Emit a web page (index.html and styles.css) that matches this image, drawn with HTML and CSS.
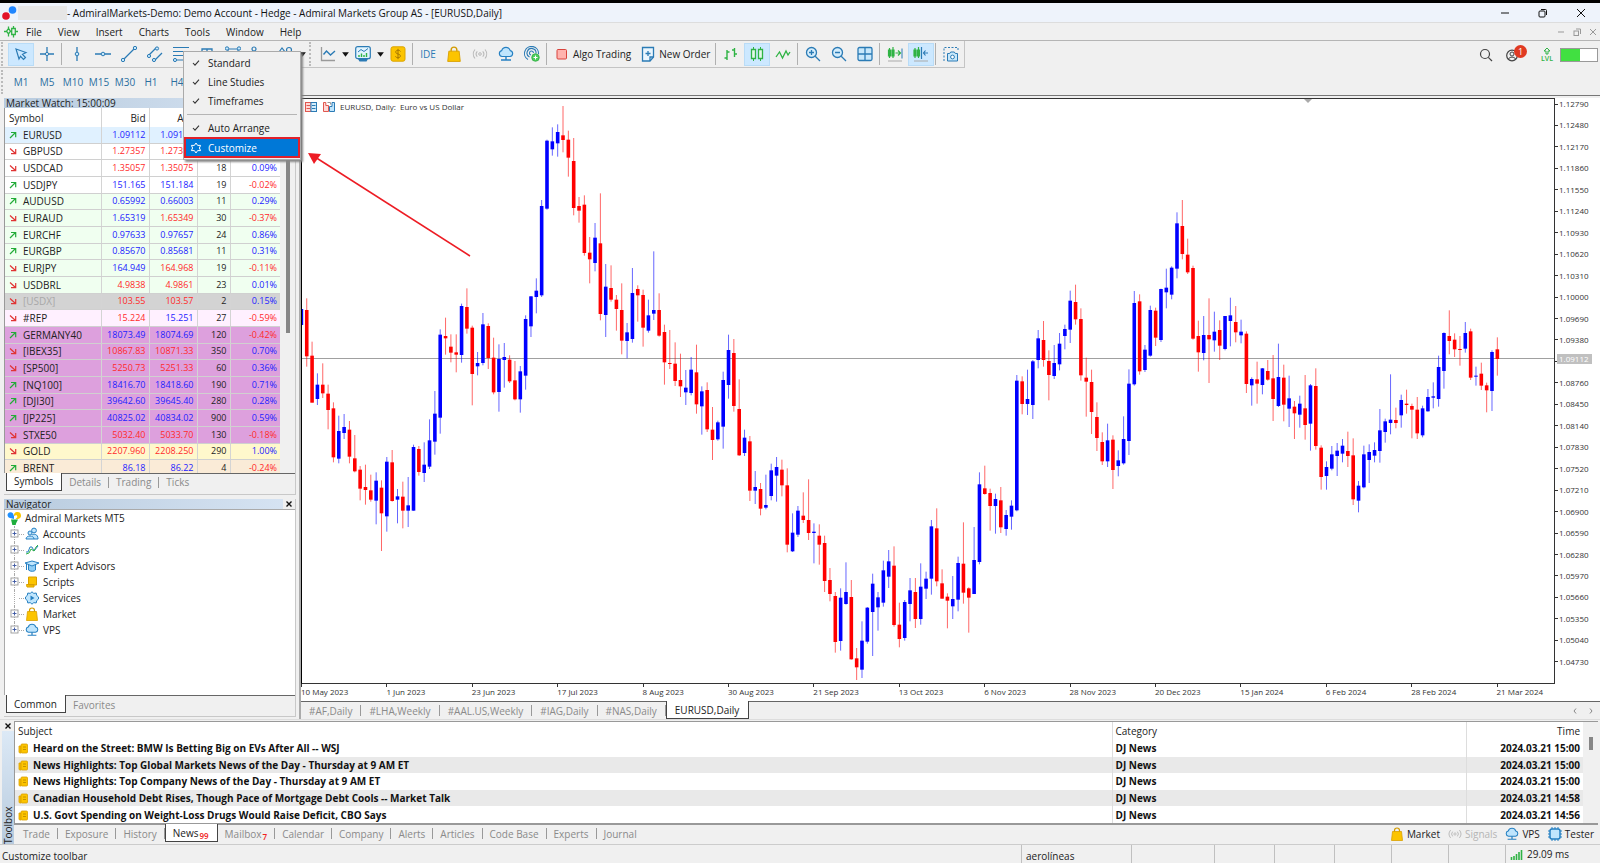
FILE: index.html
```html
<!DOCTYPE html>
<html lang="en">
<head>
<meta charset="utf-8">
<title>AdmiralMarkets-Demo - [EURUSD,Daily]</title>
<link rel="stylesheet" href="styles.css">
</head>
<body>
<svg class="defs" aria-hidden="true">
  <symbol id="up" viewBox="0 0 8 8"><path d="M1 7L6.500 1.500M2 1.500h4.700v4.700" fill="none" stroke="#22ac38" stroke-width="1.200"/></symbol>
  <symbol id="down" viewBox="0 0 8 8"><path d="M1 1.500l5.500 5M2 6.700h4.700V2" fill="none" stroke="#e03434" stroke-width="1.200"/></symbol>
  <symbol id="bag" viewBox="0 0 14 14"><path d="M4.500 6V3.500a2.500 2.500 0 0 1 5 0V6" fill="none" stroke="#d29a00" stroke-width="1.200"/><path d="M2.500 4.500h9l1 9h-11z" fill="#fcc400" stroke="#d9a000" stroke-width=".8"/></symbol>
  <symbol id="cloud" viewBox="0 0 16 16"><path d="M4 10.500a3 3 0 0 1-.3-5.900 4.500 4.500 0 0 1 8.600 0 3 3 0 0 1-.3 5.900z" fill="#bfe5fd" stroke="#2680c2" stroke-width="1.200"/><path d="M8 10.500v3M3 14h10M6.500 14h3" fill="none" stroke="#2680c2" stroke-width="1.400"/></symbol>
  <symbol id="signal" viewBox="0 0 16 12"><path d="M3 1.500a7 7 0 0 0 0 9M13 1.500a7 7 0 0 1 0 9M5.300 3.300a4 4 0 0 0 0 5.400M10.700 3.300a4 4 0 0 1 0 5.400" fill="none" stroke="#b9b9b9" stroke-width="1.100"/><circle cx="8" cy="6" r="1.300" fill="none" stroke="#b9b9b9"/></symbol>
  <symbol id="news" viewBox="0 0 10 11"><path d="M1 3h2v7H2a1 1 0 0 1-1-1z" fill="#fcc400" stroke="#d9a000" stroke-width=".8"/><rect x="3" y="1" width="6.500" height="9" rx="1" fill="#fcc400" stroke="#d9a000" stroke-width=".8"/><path d="M5 4h3M5 6.500h3" stroke="#b88600" stroke-width=".8"/></symbol>
  <symbol id="check" viewBox="0 0 8 8"><path d="M1 4l2 2.200 4-4.500" fill="none" stroke="#333" stroke-width="1.100"/></symbol>
  <symbol id="caret" viewBox="0 0 8 8"><path d="M1 2h6L4 6z" fill="#111"/></symbol>
  <symbol id="plus" viewBox="0 0 9 9"><rect x="1" y="1" width="7" height="7" fill="#fff" stroke="#999" stroke-width=".9"/><path d="M2.500 4.500h4M4.500 2.500v4" stroke="#3a55a0" stroke-width=".9"/></symbol>
</svg>
<div class="window">
<header class="titlebar">
  <svg class="logo" viewBox="0 0 16 16"><circle cx="10.500" cy="5" r="3.800" fill="#1f86ff"/><circle cx="4" cy="11" r="3.800" fill="#e2122a"/></svg>
  <span class="redact"></span>
  <h1>- AdmiralMarkets-Demo: Demo Account - Hedge - Admiral Markets Group AS - [EURUSD,Daily]</h1>
  <div class="winbtns">
    <button aria-label="Minimize"><svg viewBox="0 0 10 10"><path d="M1 5h8" stroke="#111"/></svg></button>
    <button aria-label="Restore"><svg viewBox="0 0 10 10"><rect x="1" y="3" width="6" height="6" rx="1" fill="none" stroke="#111"/><path d="M3 1.500h4.500a1 1 0 0 1 1 1V7" fill="none" stroke="#111"/></svg></button>
    <button aria-label="Close"><svg viewBox="0 0 10 10"><path d="M1 1l8 8M9 1L1 9" stroke="#111"/></svg></button>
  </div>
</header>
<nav class="menubar">
  <svg class="mt" viewBox="0 0 14 14"><path d="M4.500 1.500v2M4.500 9v2.500M9.500 1v2M9.500 9.500v3M4.500 3.500l2 2.700-2 2.800-2-2.800zM7.700 3.500h3.600v6H7.700zM11.500 6.500H14M0 6.500h2.500" fill="none" stroke="#2fb344" stroke-width="1.300"/></svg>
  <button>File</button><button>View</button><button>Insert</button><button>Charts</button><button>Tools</button><button>Window</button><button>Help</button>
  <div class="mdibtns">
    <button aria-label="Minimize chart"><svg viewBox="0 0 10 10"><path d="M2 5h6" stroke="#999"/></svg></button>
    <button aria-label="Restore chart"><svg viewBox="0 0 10 10"><rect x="2" y="4" width="4.500" height="4.500" fill="none" stroke="#999"/><path d="M4 2h4.500v5" fill="none" stroke="#999"/></svg></button>
    <button aria-label="Close chart"><svg viewBox="0 0 10 10"><path d="M2 2l6 6M8 2L2 8" stroke="#999"/></svg></button>
  </div>
</nav>
<div class="toolbar">
  <div class="tools">
    <i class="grip"></i>
    <button class="tool on" aria-label="Cursor"><svg viewBox="0 0 16 16"><path d="M3 3l10 3.500-3.500 1.800 3 3.200-2 2-3-3.200L6 13z" fill="none" stroke="#2b7bb5" stroke-width="1.200"/></svg></button>
    <button class="tool" aria-label="Crosshair"><svg viewBox="0 0 16 16"><path d="M8 1v5.500M8 9.500V15M1 8h5.500M9.500 8H15" stroke="#2b7bb5" stroke-width="1.300"/><circle cx="8" cy="8" r="1.600" fill="none" stroke="#2b7bb5"/></svg></button>
    <i class="sep"></i>
    <button class="tool" aria-label="Vertical line"><svg viewBox="0 0 16 16"><path d="M8 1v5M8 10v5" stroke="#2b7bb5" stroke-width="1.300"/><circle cx="8" cy="8" r="1.800" fill="#c8e8fb" stroke="#2b7bb5"/></svg></button>
    <button class="tool" aria-label="Horizontal line"><svg viewBox="0 0 16 16"><path d="M0 8h6M10 8h6" stroke="#2b7bb5" stroke-width="1.300"/><circle cx="8" cy="8" r="1.800" fill="#c8e8fb" stroke="#2b7bb5"/></svg></button>
    <button class="tool" aria-label="Trendline"><svg viewBox="0 0 16 16"><path d="M3 13L13 3" stroke="#2b7bb5" stroke-width="1.300"/><circle cx="2" cy="14" r="1.700" fill="#c8e8fb" stroke="#2b7bb5"/><circle cx="14" cy="2" r="1.700" fill="#c8e8fb" stroke="#2b7bb5"/></svg></button>
    <button class="tool" aria-label="Equidistant channel"><svg viewBox="0 0 16 16"><path d="M2 9l7-7M8 14l7-7" stroke="#2b7bb5" stroke-width="1.300"/><circle cx="2" cy="10" r="1.600" fill="#c8e8fb" stroke="#2b7bb5"/><circle cx="10" cy="2.500" r="1.600" fill="#c8e8fb" stroke="#2b7bb5"/><circle cx="7" cy="14" r="1.600" fill="#c8e8fb" stroke="#2b7bb5"/></svg></button>
    <button class="tool" aria-label="Fibonacci retracement"><svg viewBox="0 0 16 16"><path d="M0 1.500h16M0 5.500h16M0 9.500h16M4 14h12" stroke="#2b7bb5" stroke-width="1.200"/><circle cx="2" cy="14" r="1.600" fill="#c8e8fb" stroke="#2b7bb5"/></svg></button>
    <button class="tool" aria-label="Text"><svg viewBox="0 0 16 16"><path d="M3 5V3h10v2M8 3v11" fill="none" stroke="#2b7bb5" stroke-width="1.300"/></svg></button>
    <button class="tool" aria-label="Shapes"><svg viewBox="0 0 16 16"><path d="M3 3h10v9H3z" fill="none" stroke="#2b7bb5" stroke-width="1.200"/><circle cx="2" cy="2.500" r="1.700" fill="#c8e8fb" stroke="#2b7bb5"/><circle cx="14" cy="2.500" r="1.700" fill="#c8e8fb" stroke="#2b7bb5"/></svg></button>
    <button class="tool" aria-label="Label"><svg viewBox="0 0 16 16"><circle cx="3" cy="3" r="2" fill="none" stroke="#2b7bb5" stroke-width="1.200"/><path d="M4 5l6 9" stroke="#2b7bb5"/></svg></button>
    <button class="tool" aria-label="Objects"><svg viewBox="0 0 16 16"><path d="M2 6l3-4 3 4z" fill="none" stroke="#2b7bb5" stroke-width="1.200"/><circle cx="12" cy="4" r="2.500" fill="none" stroke="#2b7bb5" stroke-width="1.200"/></svg></button>
    <svg class="caret"><use href="#caret"/></svg>
    <i class="grip far"></i>
    <button class="tool" aria-label="Chart type"><svg viewBox="0 0 16 16"><path d="M1.500 1v13.500H15" fill="none" stroke="#9a9a9a" stroke-width="1.300"/><path d="M3.500 8.500l3-3.500 4 4 4.500-4" fill="none" stroke="#2b7bb5" stroke-width="1.400"/></svg></button>
    <svg class="caret"><use href="#caret"/></svg>
    <button class="tool" aria-label="Indicators"><svg viewBox="0 0 16 16"><path d="M3 13h10l-1.500 2.500h-7z" fill="#2b7bb5"/><rect x=".7" y=".7" width="14.600" height="12" rx="2" fill="#e2f4fe" stroke="#2b7bb5" stroke-width="1.200"/><path d="M3 6l3-2.500 3 2L13 2.500" fill="none" stroke="#2b7bb5"/><path d="M4 11V9M6.500 11V7.500M9 11V9M11.500 11V7" stroke="#2fb344" stroke-width="1.400"/></svg></button>
    <svg class="caret"><use href="#caret"/></svg>
    <button class="tool" aria-label="Trade levels"><svg viewBox="0 0 16 16"><rect x="1" y=".8" width="14" height="14.400" rx="2" fill="#fcc400" stroke="#dba400"/><path d="M10.500 5.500C10 4.500 9 4.300 8 4.300c-1.300 0-2.300.6-2.300 1.800 0 2.500 4.700 1.300 4.700 3.800 0 1.200-1 1.800-2.400 1.800-1.200 0-2.200-.4-2.500-1.400M8 2.800v10.400" fill="none" stroke="#a87800"/></svg></button>
    <i class="sep"></i>
    <button class="tool ide">IDE</button>
    <button class="tool" aria-label="Market"><svg><use href="#bag"/></svg></button>
    <button class="tool" aria-label="Signals"><svg><use href="#signal"/></svg></button>
    <button class="tool" aria-label="VPS"><svg><use href="#cloud"/></svg></button>
    <button class="tool" aria-label="Copy trading"><svg viewBox="0 0 16 16"><path d="M4 13.500A7 7 0 1 1 14.500 8M5.500 11A4.500 4.500 0 1 1 12 7.500M7 9A2 2 0 1 1 9.500 7" fill="none" stroke="#2b7bb5" stroke-width="1.100"/><circle cx="11.500" cy="11.500" r="3.800" fill="#4fce5d" stroke="#28a83c" stroke-width=".7"/><path d="M9.500 11.500h4M11.500 9.500v4" stroke="#fff"/></svg></button>
    <i class="sep"></i>
    <button class="tool wide"><svg viewBox="0 0 16 16"><rect x="3" y="3.500" width="9.500" height="9.500" rx="1" fill="#ffb3ae" stroke="#d8433c"/></svg>Algo Trading</button>
    <button class="tool wide"><svg viewBox="0 0 16 16"><path d="M2.500 1.500h11V11L10 15H2.500z" fill="#eaf6fe" stroke="#2b7bb5" stroke-width="1.300"/><path d="M5.500 7.500h5M8 5v5M10 15v-4h3.500" fill="none" stroke="#2b7bb5" stroke-width="1.300"/></svg>New Order</button>
    <i class="sep"></i>
    <button class="tool" aria-label="Bar chart"><svg viewBox="0 0 16 16"><path d="M4 4v10M1.500 12H4M4 6h2.500M11.500 2v9M9 4h2.500M11.500 8H14" fill="none" stroke="#2fb344" stroke-width="1.400"/></svg></button>
    <button class="tool on" aria-label="Candlesticks"><svg viewBox="0 0 16 16"><path d="M4.500 1v14M11.500 1v14" stroke="#2fb344"/><path d="M2.500 3.500h4v9h-4zM9.500 3.500h4v9h-4z" fill="#e4f8e8" stroke="#2fb344" stroke-width="1.300"/></svg></button>
    <button class="tool" aria-label="Line chart"><svg viewBox="0 0 16 16"><path d="M1 11l3.500-5 3 6 3.500-7 2 4 2-3" fill="none" stroke="#2fb344" stroke-width="1.300"/></svg></button>
    <i class="sep"></i>
    <button class="tool" aria-label="Zoom in"><svg viewBox="0 0 16 16"><circle cx="6.500" cy="6.500" r="5" fill="#d4edfc" stroke="#2b7bb5" stroke-width="1.300"/><path d="M10.200 10.200L15 15M4 6.500h5M6.500 4v5" stroke="#2b7bb5" stroke-width="1.300"/></svg></button>
    <button class="tool" aria-label="Zoom out"><svg viewBox="0 0 16 16"><circle cx="6.500" cy="6.500" r="5" fill="#d4edfc" stroke="#2b7bb5" stroke-width="1.300"/><path d="M10.200 10.200L15 15M4 6.500h5" stroke="#2b7bb5" stroke-width="1.300"/></svg></button>
    <button class="tool" aria-label="Tile windows"><svg viewBox="0 0 16 16"><rect x="1" y="1.500" width="14" height="13" rx="1.500" fill="#c8e8fb" stroke="#2b7bb5" stroke-width="1.300"/><path d="M8 1.500v13M1 8h14" stroke="#2b7bb5" stroke-width="1.300"/></svg></button>
    <i class="sep"></i>
    <button class="tool" aria-label="Auto scroll"><svg viewBox="0 0 16 16"><path d="M2.500 2v10M6 1v11M1.500 4h2v6h-2zM5 4h2v6H5zM8.500 7H13M11 4.500L13.500 7 11 9.500" fill="none" stroke="#2fb344" stroke-width="1.200"/><path d="M15 2.500v10" stroke="#2b7bb5"/><path d="M1 15h14" stroke="#aaa"/></svg></button>
    <button class="tool on" aria-label="Chart shift"><svg viewBox="0 0 16 16"><path d="M2 2v10M5.500 1v11M1 4h2v6H1zM4.500 4h2v6h-2z" fill="none" stroke="#2fb344" stroke-width="1.200"/><path d="M8.500 1v12M15 7h-4.500M12.500 4.500L10.500 7l2 2.500" fill="none" stroke="#2b7bb5" stroke-width="1.200"/><path d="M1 15h14" stroke="#aaa"/></svg></button>
    <i class="sep"></i>
    <button class="tool" aria-label="Screenshot"><svg viewBox="0 0 16 16"><path d="M1 15V1.500h14V5" fill="none" stroke="#2b7bb5" stroke-dasharray="2 1.500"/><path d="M4.500 7.500h2.200l1-1.500h3.600l1 1.500h2.200V15h-10z" fill="#c8e8fb" stroke="#2b7bb5"/><circle cx="9.500" cy="11" r="1.900" fill="#fff" stroke="#2b7bb5"/></svg></button>
  </div>
  <div class="right-tools">
    <button class="tool" aria-label="Search"><svg viewBox="0 0 16 16"><circle cx="7" cy="7" r="4.500" fill="none" stroke="#444" stroke-width="1.200"/><path d="M10.300 10.300L14 14" stroke="#444" stroke-width="1.200"/></svg></button>
    <button class="tool account" aria-label="Account"><svg viewBox="0 0 16 16"><circle cx="8" cy="8.500" r="5.300" fill="none" stroke="#444" stroke-width="1.200"/><circle cx="8" cy="7" r="2" fill="none" stroke="#444"/><path d="M4.500 12c1-2.500 6-2.500 7 0" fill="none" stroke="#444"/></svg><b class="badge">1</b></button>
    <div class="level"><svg viewBox="0 0 10 8"><path d="M5 1l3 3H6v3H4V4H2z" fill="none" stroke="#2fb344"/></svg><span>LVL</span></div>
    <div class="meter"><i></i></div>
  </div>
</div>
<div class="timeframes">
  <i class="grip"></i>
  <button>M1</button><button>M5</button><button>M10</button><button>M15</button><button>M30</button><button>H1</button><button>H4</button>
</div>
<main class="workspace">
  <aside class="dock">
    <section class="panel market">
      <h2 class="caption">Market Watch: 15:00:09</h2>
      <div class="quotes">
        <table>
          <thead><tr><th>Symbol</th><th>Bid</th><th>Ask</th><th>!</th><th>Change</th></tr></thead>
          <tbody>
          <tr class="sky"><td><svg><use href="#up"/></svg>EURUSD</td><td class="b">1.09112</td><td class="b">1.09116</td><td>4</td><td class="b">0.00%</td></tr>
          <tr><td><svg><use href="#down"/></svg>GBPUSD</td><td class="r">1.27357</td><td class="r">1.27364</td><td>7</td><td class="r">-0.36%</td></tr>
          <tr><td><svg><use href="#down"/></svg>USDCAD</td><td class="r">1.35057</td><td class="r">1.35075</td><td>18</td><td class="b">0.09%</td></tr>
          <tr><td><svg><use href="#up"/></svg>USDJPY</td><td class="b">151.165</td><td class="b">151.184</td><td>19</td><td class="r">-0.02%</td></tr>
          <tr class="mint"><td><svg><use href="#up"/></svg>AUDUSD</td><td class="b">0.65992</td><td class="b">0.66003</td><td>11</td><td class="b">0.29%</td></tr>
          <tr class="mint"><td><svg><use href="#down"/></svg>EURAUD</td><td class="b">1.65319</td><td class="r">1.65349</td><td>30</td><td class="r">-0.37%</td></tr>
          <tr class="mint"><td><svg><use href="#up"/></svg>EURCHF</td><td class="b">0.97633</td><td class="b">0.97657</td><td>24</td><td class="b">0.86%</td></tr>
          <tr class="mint"><td><svg><use href="#up"/></svg>EURGBP</td><td class="b">0.85670</td><td class="b">0.85681</td><td>11</td><td class="b">0.31%</td></tr>
          <tr class="mint"><td><svg><use href="#down"/></svg>EURJPY</td><td class="b">164.949</td><td class="r">164.968</td><td>19</td><td class="r">-0.11%</td></tr>
          <tr class="mint"><td><svg><use href="#down"/></svg>USDBRL</td><td class="r">4.9838</td><td class="r">4.9861</td><td>23</td><td class="b">0.01%</td></tr>
          <tr class="grey"><td><svg><use href="#down"/></svg>[USDX]</td><td class="r">103.55</td><td class="r">103.57</td><td>2</td><td class="b">0.15%</td></tr>
          <tr class="rose"><td><svg><use href="#down"/></svg>#REP</td><td class="r">15.224</td><td class="b">15.251</td><td>27</td><td class="r">-0.59%</td></tr>
          <tr class="plum"><td><svg><use href="#up"/></svg>GERMANY40</td><td class="b">18073.49</td><td class="b">18074.69</td><td>120</td><td class="r">-0.42%</td></tr>
          <tr class="plum"><td><svg><use href="#down"/></svg>[IBEX35]</td><td class="r">10867.83</td><td class="r">10871.33</td><td>350</td><td class="b">0.70%</td></tr>
          <tr class="plum"><td><svg><use href="#down"/></svg>[SP500]</td><td class="r">5250.73</td><td class="r">5251.33</td><td>60</td><td class="b">0.36%</td></tr>
          <tr class="plum"><td><svg><use href="#up"/></svg>[NQ100]</td><td class="b">18416.70</td><td class="b">18418.60</td><td>190</td><td class="b">0.71%</td></tr>
          <tr class="plum"><td><svg><use href="#up"/></svg>[DJI30]</td><td class="b">39642.60</td><td class="b">39645.40</td><td>280</td><td class="b">0.28%</td></tr>
          <tr class="plum"><td><svg><use href="#up"/></svg>[JP225]</td><td class="b">40825.02</td><td class="b">40834.02</td><td>900</td><td class="b">0.59%</td></tr>
          <tr class="plum"><td><svg><use href="#down"/></svg>STXE50</td><td class="r">5032.40</td><td class="r">5033.70</td><td>130</td><td class="r">-0.18%</td></tr>
          <tr class="gold"><td><svg><use href="#down"/></svg>GOLD</td><td class="r">2207.960</td><td class="r">2208.250</td><td>290</td><td class="b">1.00%</td></tr>
          <tr class="peach"><td><svg><use href="#up"/></svg>BRENT</td><td class="b">86.18</td><td class="b">86.22</td><td>4</td><td class="r">-0.24%</td></tr>
          </tbody>
        </table>
        <div class="scroll"><i></i></div>
      </div>
      <div class="tabs"><button class="active">Symbols</button><button>Details</button><button>Trading</button><button>Ticks</button></div>
    </section>
    <section class="panel navigator">
      <h2 class="caption">Navigator<button aria-label="Close navigator"><svg viewBox="0 0 8 8"><path d="M1.500 1.500l5 5M6.500 1.500l-5 5" stroke="#111" stroke-width="1.400"/></svg></button></h2>
      <ul class="tree">
        <li class="root"><svg class="ti" viewBox="0 0 14 14"><path d="M1 2.500a3 3 0 0 1 5 0L7 5v3L3 7A3 3 0 0 1 1 2.500z" fill="#1e90ff"/><path d="M7 5a3.500 3.500 0 1 1 4 3H8.500l2-2-1-2z" fill="#f7c600"/><path d="M4 8.500h7l-2 4a2 2 0 0 1-4 0z" fill="#1fae3d"/></svg>Admiral Markets MT5</li>
        <li><svg class="px"><use href="#plus"/></svg><svg class="ti" viewBox="0 0 14 14"><circle cx="5" cy="6" r="2" fill="#bfe5fd" stroke="#2680c2"/><circle cx="9" cy="3.500" r="2.400" fill="#bfe5fd" stroke="#2680c2"/><path d="M1 12c0-4 8-4 8 0zM7 8c2-1.500 6-1 6 4H9" fill="#bfe5fd" stroke="#2680c2"/></svg>Accounts</li>
        <li><svg class="px"><use href="#plus"/></svg><svg class="ti" viewBox="0 0 14 14"><path d="M1 9h2l2-5h2l2 4 4-5" fill="none" stroke="#2680c2"/><path d="M1 11l3-1 2-4 3 2 2-4 2-2" fill="none" stroke="#2fb344"/></svg>Indicators</li>
        <li><svg class="px"><use href="#plus"/></svg><svg class="ti" viewBox="0 0 14 14"><path d="M3.500 6v5c2 2 6 1.500 7 0V6" fill="#8fcdf5" stroke="#2680c2"/><path d="M0 4l7-2 7 2-7 3z" fill="#bfe5fd" stroke="#2680c2"/><path d="M1.500 5v6" stroke="#2680c2"/></svg>Expert Advisors</li>
        <li><svg class="px"><use href="#plus"/></svg><svg class="ti" viewBox="0 0 14 14"><path d="M3.500 2h8v8h-8zM1.500 9.500H9V12H2z" fill="#fcc400" stroke="#d9a000"/></svg>Scripts</li>
        <li><i class="px"></i><svg class="ti" viewBox="0 0 14 14"><path d="M7 .8l1.800 1.600 2.400-.4.500 2.400L13.500 6v2l-1.800 1.600-.5 2.400-2.400-.4L7 13.200l-1.800-1.600-2.400.4-.5-2.400L.5 8V6l1.800-1.600.5-2.400 2.400.4z" fill="#bfe5fd" stroke="#2680c2"/><path d="M5.500 4.500v5l4-2.500z" fill="#2680c2"/></svg>Services</li>
        <li><svg class="px"><use href="#plus"/></svg><svg class="ti"><use href="#bag"/></svg>Market</li>
        <li class="last"><svg class="px"><use href="#plus"/></svg><svg class="ti"><use href="#cloud"/></svg>VPS</li>
      </ul>
      <div class="tabs"><button class="active">Common</button><button>Favorites</button></div>
    </section>
  </aside>
  <section class="chart-window">
    <div class="chart">
      <div class="plot">
        <svg class="candles" id="candles" viewBox="302 99 1252 584" preserveAspectRatio="none" role="img" aria-label="EURUSD daily candles"></svg>
        <div class="chart-title">
          <svg viewBox="0 0 14 12"><rect x="1.500" y="1.500" width="5.500" height="9" fill="#ffd9d6" stroke="#e0574f"/><rect x="7" y="1.500" width="5.500" height="9" fill="#d4edfc" stroke="#2b7bb5"/><path d="M2.500 4.500h3.500M2.500 7.500h3.500" stroke="#e0574f"/><path d="M8 4.500h3.500M8 7.500h3.500" stroke="#2b7bb5"/></svg>
          <svg viewBox="0 0 14 12"><path d="M1.500 10.500v-9h2.300v3h2.700v6z" fill="#ffd9d6" stroke="#e0574f"/><path d="M7.500 10.500v-5H10v-4h2.500v9z" fill="#bfe5fd" stroke="#2b7bb5"/><path d="M5.500 1.500h3v2" fill="none" stroke="#999"/></svg>
          <span>EURUSD, Daily:&nbsp; Euro vs US Dollar</span>
        </div>
        <i class="shift-mark"></i>
      </div>
      <div class="prices">
        <span>1.12790</span><span>1.12480</span><span>1.12170</span><span>1.11860</span><span>1.11550</span><span>1.11240</span><span>1.10930</span><span>1.10620</span><span>1.10310</span><span>1.10000</span><span>1.09690</span><span>1.09380</span><span>1.09070</span><span>1.08760</span><span>1.08450</span><span>1.08140</span><span>1.07830</span><span>1.07520</span><span>1.07210</span><span>1.06900</span><span>1.06590</span><span>1.06280</span><span>1.05970</span><span>1.05660</span><span>1.05350</span><span>1.05040</span><span>1.04730</span>
        <b class="last-price">1.09112</b>
      </div>
      <div class="dates">
        <span>10 May 2023</span><span>1 Jun 2023</span><span>23 Jun 2023</span><span>17 Jul 2023</span><span>8 Aug 2023</span><span>30 Aug 2023</span><span>21 Sep 2023</span><span>13 Oct 2023</span><span>6 Nov 2023</span><span>28 Nov 2023</span><span>20 Dec 2023</span><span>15 Jan 2024</span><span>6 Feb 2024</span><span>28 Feb 2024</span><span>21 Mar 2024</span>
      </div>
    </div>
    <div class="tabs chart-tabs"><button>#AF,Daily</button><button>#LHA,Weekly</button><button>#AAL.US,Weekly</button><button>#IAG,Daily</button><button>#NAS,Daily</button><button class="active">EURUSD,Daily</button>
      <span class="tab-arrows"><svg viewBox="0 0 6 8"><path d="M4 1.500L2 4l2 2.500" fill="none" stroke="#888"/></svg><svg viewBox="0 0 6 8"><path d="M2 1.500L4 4 2 6.500" fill="none" stroke="#888"/></svg></span></div>
  </section>
</main>
<section class="toolbox">
  <div class="strip"><button aria-label="Close toolbox"><svg viewBox="0 0 8 8"><path d="M1.500 1.500l5 5M6.500 1.500l-5 5" stroke="#111" stroke-width="1.400"/></svg></button><span>Toolbox</span></div>
  <div class="toolbox-body">
    <div class="news">
      <table>
        <thead><tr><th>Subject</th><th>Category</th><th>Time</th></tr></thead>
        <tbody>
        <tr><td><svg><use href="#news"/></svg>Heard on the Street: BMW Is Betting Big on EVs After All -- WSJ</td><td>DJ News</td><td>2024.03.21 15:00</td></tr>
        <tr><td><svg><use href="#news"/></svg>News Highlights: Top Global Markets News of the Day - Thursday at 9 AM ET</td><td>DJ News</td><td>2024.03.21 15:00</td></tr>
        <tr><td><svg><use href="#news"/></svg>News Highlights: Top Company News of the Day - Thursday at 9 AM ET</td><td>DJ News</td><td>2024.03.21 15:00</td></tr>
        <tr><td><svg><use href="#news"/></svg>Canadian Household Debt Rises, Though Pace of Mortgage Debt Cools -- Market Talk</td><td>DJ News</td><td>2024.03.21 14:58</td></tr>
        <tr><td><svg><use href="#news"/></svg>U.S. Govt Spending on Weight-Loss Drugs Would Raise Deficit, CBO Says</td><td>DJ News</td><td>2024.03.21 14:56</td></tr>
        </tbody>
      </table>
      <div class="scroll"><i></i></div>
    </div>
    <div class="tabs"><button>Trade</button><button>Exposure</button><button>History</button><button class="active">News<sub>99</sub></button><button>Mailbox<sub>7</sub></button><button>Calendar</button><button>Company</button><button>Alerts</button><button>Articles</button><button>Code Base</button><button>Experts</button><button>Journal</button>
      <div class="services"><a href="#market"><svg><use href="#bag"/></svg>Market</a><a href="#signals" class="off"><svg><use href="#signal"/></svg>Signals</a><a href="#vps"><svg><use href="#cloud"/></svg>VPS</a><a href="#tester"><svg viewBox="0 0 14 14"><path d="M4 0v14M7 0v14M10 0v14M0 4h14M0 7h14M0 10h14" stroke="#2680c2"/><rect x="2" y="2" width="10" height="10" rx="2" fill="#bfe5fd" stroke="#2680c2" stroke-width="1.500"/></svg>Tester</a></div></div>
  </div>
</section>
<footer class="status">
  <span class="hint">Customize toolbar</span><span class="profile">aerolíneas</span><span class="c83"></span><span class="c60"></span><span class="c60"></span><span class="c57"></span><span class="c57"></span><span class="c57"></span>
  <span class="ping"><svg viewBox="0 0 13 11"><path d="M1.500 11V8M4 11V7M6.500 11V5M9 11V3M11.500 11V1" stroke="#2fb344" stroke-width="1.600"/></svg>29.09 ms</span>
</footer>
<div class="context" role="menu">
  <button role="menuitem"><svg><use href="#check"/></svg>Standard</button>
  <button role="menuitem"><svg><use href="#check"/></svg>Line Studies</button>
  <button role="menuitem"><svg><use href="#check"/></svg>Timeframes</button>
  <hr>
  <button role="menuitem"><svg><use href="#check"/></svg>Auto Arrange</button>
  <button role="menuitem" class="hot"><svg viewBox="0 0 12 12"><path d="M6 1l1.600 2.400h3L9.400 6l1.200 2.600h-3L6 11 4.400 8.600h-3L2.600 6 1.400 3.400h3z" fill="none" stroke="#fff"/></svg>Customize</button>
</div>
<svg class="arrow" viewBox="0 0 166 106" aria-hidden="true"><path d="M8 5l155 99" stroke="#ed1c24" stroke-width="1.500"/><path d="M1 1l13 1-7 10z" fill="#ed1c24"/></svg>
</div>
<script src="chart.js"></script>
</body>
</html>
```
FILE: styles.css
```css
* { box-sizing: border-box; }
body { margin: 0; background: #f0f0f0; color: #222; font: 10px/12px "Open Sans", "Noto Sans", sans-serif; }
button { font: inherit; color: inherit; background: none; border: 0; padding: 0; margin: 0; white-space: nowrap; }
a { color: inherit; text-decoration: none; }
h1, h2 { margin: 0; font: inherit; }
svg { display: block; flex: none; }
.defs { position: absolute; width: 0; height: 0; }
.window { position: relative; display: flex; flex-direction: column; min-height: 100vh; border-top: 3px solid #000; }

.titlebar { display: flex; align-items: center; height: 20px; background: #eef3fb; border-bottom: 1px solid #ddd; }
.logo { width: 16px; height: 16px; margin-left: 2px; }
.redact { width: 49px; height: 14px; background: #e6e6e6; }
.titlebar h1 { color: #111; }
.winbtns { display: flex; margin-left: auto; }
.winbtns button { width: 38px; display: flex; justify-content: center; }
.winbtns svg, .mdibtns svg { width: 10px; height: 10px; }

.menubar { display: flex; align-items: center; gap: 16px; height: 18px; padding-left: 4px; border-bottom: 1px solid #b5b5b5; }
.mt { width: 14px; height: 14px; margin-right: -8px; }
.mdibtns { display: flex; gap: 6px; margin-left: auto; padding-right: 2px; }

.toolbar { display: flex; align-items: center; justify-content: space-between; height: 27px; }
.tools { display: flex; align-items: center; height: 27px; border-bottom: 1px solid #c4c4c4; border-right: 1px solid #c4c4c4; }
.grip { width: 3px; height: 24px; margin: 0 4px 0 1px; border-left: 2px dotted #bbb; }
.grip.far { margin: 0 3px 0 2px; }
.sep { width: 1px; height: 22px; margin: 0 2px 0 1px; background: #b0b0b0; }
.tool { width: 26px; height: 23px; display: flex; align-items: center; justify-content: center; }
.tool svg { width: 16px; height: 16px; }
.tool.on { background: #cce8ff; border: 1px solid #b9dcf7; }
.tools .caret { width: 9px; height: 9px; }
.ide { color: #2b7bb5; }
.tool.wide { width: auto; gap: 3px; padding: 0 4px 0 5px; }
.right-tools { display: flex; align-items: center; padding-right: 2px; }
.account { position: relative; }
.badge { position: absolute; left: 15px; top: 2px; width: 13px; height: 13px; border-radius: 50%; background: #e03a22; color: #fff; font: 9px/13px "Open Sans", sans-serif; text-align: center; }
.level { width: 20px; margin: 0 3px 0 12px; color: #2fb344; font-size: 7px; line-height: 8px; font-weight: 600; display: flex; flex-direction: column; align-items: center; }
.level svg { width: 10px; height: 8px; }
.meter { width: 38px; height: 14px; border: 1px solid #999; background: #fff; }
.meter i { display: block; width: 53%; height: 100%; background: #41e041; }
.timeframes { display: flex; align-items: center; height: 27px; color: #2b6f9f; }
.timeframes button { width: 26px; }

.workspace { flex: 1; display: grid; grid-template-columns: 301px minmax(0, 1fr); min-height: 0; }
.dock { display: flex; flex-direction: column; gap: 4px; padding: 3px 3px 2px 4px; border-right: 2px solid #ababab; }
.panel { display: flex; flex-direction: column; border-bottom: 1px solid #c8c8c8; border-right: 1px solid #c8c8c8; }
.market { flex: 397 1 0; }
.navigator { flex: 218 1 0; }
.caption { display: flex; justify-content: space-between; align-items: center; height: 10px; padding-left: 2px; line-height: 10px; background: linear-gradient(90deg, #b8cbde, #d7e4f3); }
.caption button { width: 12px; height: 10px; display: flex; align-items: center; justify-content: center; background: #f0f0f0; }
.caption svg { width: 8px; height: 8px; }
.quotes { flex: 1 1 0; display: flex; align-items: flex-start; min-height: 0; height: 365px; overflow: hidden; border-left: 1px solid #999; background: #f0f0f0; }
table { border-collapse: collapse; table-layout: fixed; }
th { font-weight: 400; }
.quotes table { width: 276px; height: 369px; background: #fff; line-height: 12px; }
.quotes th, .quotes td { padding: 0 3px 0 0; text-align: right; border-right: 1px solid #d4d4d4; border-bottom: 1px solid #d0d0d0; }
.quotes td:nth-child(n+2) { font-size: 9px; }
.quotes th { height: 19px; border-bottom: 0; }
.quotes th:last-child, .quotes td:last-child { border-right: 0; }
.quotes th:nth-child(1) { width: 96px; }
.quotes th:nth-child(2), .quotes th:nth-child(3) { width: 48px; }
.quotes th:nth-child(4) { width: 33px; }
.quotes th:first-child { text-align: left; padding-left: 4px; }
.quotes td:first-child { text-align: left; padding-left: 4px; }
.quotes td svg { display: inline-block; width: 8px; height: 8px; margin-right: 6px; vertical-align: 0; }
.b { color: #2222ff; }
.r { color: #ff2a2a; }
.sky { background: #e0f1ff; }
.mint { background: #f0fff0; }
.grey { background: #d3d3d3; }
.grey td:first-child { color: #a8a8a8; }
.rose { background: #fff0ff; }
.plum { background: #dda0dd; }
.gold { background: #fff8cc; }
.peach { background: #faebd7; }
.scroll { width: 15px; display: flex; justify-content: center; background: #f0f0f0; }
.scroll i { width: 4px; background: #868686; }
.quotes .scroll i { height: 207px; margin-top: 18px; }

.tabs { display: flex; flex: none; color: #8a8a8a; border-top: 1px solid #666; }
.tabs button { position: relative; height: 17px; padding: 0 8px 0 7px; line-height: 16px; }
.tabs button:not(.active, :last-of-type)::after { content: ""; position: absolute; right: 0; top: 3px; height: 11px; border-right: 1px solid #999; }
.tabs button.active { margin-top: -1px; height: 18px; background: #fff; color: #222; border: 1px solid #444; border-top: 0; }
.panel .tabs { height: 21px; margin-left: 2px; }
.tree { flex: 1 1 0; margin: 0; padding: 0; list-style: none; background: #fff; border: 1px solid #aaa; border-width: 1px 0 0 1px; }
.tree li { position: relative; display: flex; align-items: center; height: 16px; padding-left: 5px; }
.tree li.root { padding-left: 2px; }
.tree li:not(.root)::before { content: ""; position: absolute; left: 9px; top: 0; height: 16px; border-left: 1px dotted #aaa; }
.tree li.last::before { height: 8px; }
.tree li:not(.root)::after { content: ""; position: absolute; left: 14px; top: 8px; width: 5px; border-top: 1px dotted #aaa; }
.px { position: relative; width: 9px; height: 9px; margin-right: 6px; }
.ti { width: 14px; height: 14px; margin-right: 4px; }

.chart-window { display: flex; flex-direction: column; min-width: 0; border-top: 1px solid #777; padding-top: 2px; }
.chart { flex: 1; display: grid; grid-template: minmax(0, 1fr) 17px / minmax(0, 1fr) 45px; background: #fff; font-size: 8px; line-height: 10px; color: #333; }
.plot { position: relative; border: 1px solid #333; border-left-color: #000; }
.candles { position: absolute; inset: 0; width: 100%; height: 100%; }
.chart-title { position: relative; display: flex; align-items: center; gap: 4px; padding: 2px 0 0 2px; }
.chart-title svg { width: 14px; height: 12px; }
.shift-mark { position: absolute; left: 80%; top: 0; border: 4px solid transparent; border-top-color: #aaa; border-bottom: 0; }
.prices { position: relative; display: flex; flex-direction: column; justify-content: space-between; padding: 1px 0 17px; }
.prices span { display: flex; align-items: center; gap: 1px; }
.prices span::before { content: ""; width: 3px; border-top: 1px solid #333; }
.last-price { position: absolute; left: 2px; right: 8px; top: 256px; padding-left: 2px; background: #c0c0c0; color: #fff; font-weight: 400; }
.dates { grid-column: 1 / -1; display: grid; grid-template-columns: repeat(15, 85fr) 18fr; white-space: nowrap; }
.dates span { position: relative; padding-top: 3px; }
.dates span::before { content: ""; position: absolute; left: 0; top: 0; height: 3px; border-left: 1px solid #333; }
.chart-tabs { height: 18px; }
.chart-tabs button { padding: 0 9px 0 8px; }
.tab-arrows { display: flex; gap: 10px; margin-left: auto; padding-right: 6px; align-items: center; }
.tab-arrows svg { width: 6px; height: 8px; }

.toolbox { display: flex; padding: 1px 2px 0 2px; height: 126px; border-bottom: 1px solid #ccc; border-top: 1px solid #ddd; }
.strip { width: 12px; display: flex; flex-direction: column; align-items: center; justify-content: space-between; }
.strip button { padding: 1px 2px; }
.strip svg { width: 8px; height: 8px; }
.strip span { flex: 1; width: 12px; writing-mode: vertical-rl; transform: rotate(180deg); line-height: 12px; background: linear-gradient(0deg, #dce9f6, #b8cbde); }
.toolbox-body { flex: 1; min-width: 0; display: flex; flex-direction: column; }
.news { display: flex; border: 1px solid #999; border-right: 0; border-bottom: 2px solid #999; background: #fff; }
.news table { flex: 1; height: 101px; line-height: 12px; }
.news th, .news td { padding: 0 3px; text-align: left; border-right: 1px solid #ddd; }
.news th { height: 18px; }
.news th:nth-child(2) { width: 354px; }
.news th:nth-child(3) { width: 117px; }
.news th:last-child, .news td:last-child { text-align: right; border-right: 0; }
.news td { font-weight: 700; color: #111; }
.news tr:nth-child(even) td { background: #e9e9e9; }
.news td svg { display: inline-block; width: 10px; height: 11px; margin-right: 5px; vertical-align: -2px; }
.news .scroll i { height: 13px; margin-top: 15px; }
.toolbox .tabs { height: 18px; padding-left: 2px; border-top: 0; }
.tabs sub { color: #f02020; font-size: 8px; line-height: 8px; font-weight: 600; vertical-align: -2px; margin-left: 1px; }
.services { display: flex; align-items: center; gap: 8px; margin-left: auto; padding-right: 4px; color: #222; }
.services a { display: flex; align-items: center; gap: 3px; }
.services svg { width: 14px; height: 14px; }
.services .off { color: #b5b5b5; }

.status { display: flex; height: 18px; padding-left: 2px; line-height: 22px; }
.status span { padding-left: 4px; border-left: 1px solid #c0c0c0; }
.status .hint { flex: 1; padding: 0; border: 0; }
.profile { width: 110px; }
.c83 { width: 83px; }
.c60 { width: 60px; }
.c57 { width: 57px; }
.ping { width: 95px; display: flex; align-items: center; gap: 4px; }
.ping svg { width: 13px; height: 11px; }

.context { position: absolute; left: 183px; top: 48px; width: 118px; padding: 1px; background: #f0f0f0; border: 1px solid #aaa; box-shadow: 2px 2px 2px #888; }
.context button { display: flex; align-items: center; gap: 8px; width: 100%; height: 19px; padding-left: 7px; }
.context svg { width: 8px; height: 8px; }
.context hr { height: 1px; margin: 4px 2px 3px; border: 0; background: #b5b5b5; }
.context .hot { width: 116px; height: 21px; margin-left: -1px; padding-left: 4px; gap: 6px; background: #0078d7; color: #fff; border: 2px solid #e2202a; }
.context .hot svg { width: 12px; height: 12px; }
.arrow { position: absolute; left: 307px; top: 149px; width: 166px; height: 106px; }
```
FILE: chart.js
```js
// Daily bars: direction, high, body top, body bottom, low.
// Vertical values are in thirds of a unit, relative to each block's base.
const blocks = [
  { base: 270, bars: `B 657 657 705 705|R 625 660 799 830|R 755 797 938 938|B 850 884 927 945|R 820 884 910 924|R 884 911 960 1018|R 937 955 1102 1117|B 977 1023 1106 1120|B 972 1011 1029 1047|R 993 1019 1100 1120|R 1035 1105 1144 1147|R 1128 1139 1196 1231|R 1124 1191 1200 1244|R 1154 1201 1229 1235|B 1147 1172 1232 1303|R 1171 1193 1270 1383|B 1101 1115 1279 1325|R 1080 1117 1233 1235|B 1197 1219 1229 1300|R 1175 1220 1262 1315|B 1161 1246 1262 1311|B 1064 1071 1262 1262|R 1068 1077 1146 1157|B 1057 1124 1149 1176|B 988 1051 1130 1137|B 903 971 1055 1094|B 718 734 983 1031|R 683 738 745 794|R 733 770 788 817|R 733 787 794 847|B 641 648 795 818|R 595 651 716 731|R 707 713 852 946|B 786 819 829 856|B 669 703 819 826|R 700 708 804 837|R 743 803 907 913|B 763 807 906 965|B 759 801 810 893|R 796 809 874 879|R 813 871 928 931|B 828 844 928 968|B 676 687 857 899|B 618 619 709 741|B 565 602 621 670|B 330 348 616 621|B 149 152 356 359|B 112 154 178 197|B 103 126 160 200|R 48 136 150 187|R 122 149 203 260|R 144 213 354 376|R 321 348 362 398|R 316 344 489 497|R 441 488 508 580|B 399 443 519 544|R 310 460 672 691|B 522 590 675 741|R 526 594 629 635|R 615 629 657 722|R 580 660 752 793|B 699 727 753 805|B 534 609 747 758|R 586 597 616 695|R 599 615 713 770|B 629 676 722 728|B 484 660 671 690` },
  { base: 690, bars: `R 190 240 317 320|R 284 306 397 464|R 300 399 402 417|R 337 401 453 468|R 371 450 469 501|B 420 473 487 525|B 381 419 489 496|R 344 427 523 551|B 469 484 529 614|R 457 480 598 606|R 531 599 630 690|B 572 577 628 632|B 425 450 590 656|B 314 360 465 506|R 327 369 528 545|R 448 537 676 678|B 599 623 669 678|R 618 634 782 813|B 723 771 782 822|R 759 777 836 856|B 734 825 833 838|B 701 721 798 811|B 681 711 737 815|R 689 719 766 799|R 715 766 944 967|B 850 908 964 966|B 828 842 914 921|R 787 857 870 879|R 748 870 909 930|B 880 905 909 1000|R 883 917 944 1004|R 917 939 1053 1086|R 1014 1050 1092 1114|R 1086 1098 1236 1268|B 1075 1103 1233 1262|B 997 1086 1122 1124|R 1050 1101 1288 1289|R 1254 1285 1312 1350|B 1174 1232 1319 1344|B 1131 1133 1235 1241|B 1031 1061 1146 1278|B 1086 1102 1132 1202|B 992 1021 1118 1130|B 960 994 1040 1074|R 949 1007 1185 1190|R 1118 1184 1227 1252|B 1110 1116 1224 1232|B 1044 1081 1122 1174|R 1044 1086 1167 1194|B 1000 1070 1167 1184|B 1025 1046 1076 1107|B 870 889 1046 1094|R 835 895 1054 1069|R 1018 1060 1106 1106|R 1090 1100 1112 1195|B 1038 1107 1129 1167|B 980 999 1109 1144|R 877 1001 1088 1121|R 1072 1075 1103 1208|B 891 990 1092 1092|B 727 763 996 1003` },
  { base: 540, bars: `R 857 925 942 944|R 926 939 978 1052|B 941 957 978 1061|R 921 961 1042 1059|B 990 1005 1047 1067|B 961 977 1010 1049|B 585 602 991 994|R 589 604 672 703|B 569 657 672 705|B 540 544 675 717|B 450 475 540 565|R 423 480 540 560|R 511 543 585 661|B 495 549 588 597|B 459 491 553 571|B 434 447 468 508|B 332 362 449 489|R 314 366 418 434|R 385 417 586 602|R 533 593 605 710|R 569 606 696 762|R 667 711 774 813|R 757 786 844 855|B 731 781 844 861|R 766 779 870 927|B 811 841 858 889|B 709 777 850 854|B 568 611 783 825|B 333 369 613 617|R 343 364 574 584|B 495 509 570 576|B 377 390 527 530|R 383 392 473 498|B 326 327 480 486|B 266 323 337 385|B 259 263 344 358|B 97 130 266 295|R 60 138 222 238|R 176 224 277 282|R 257 264 476 479|R 422 468 517 575|B 408 465 519 541|R 355 465 478 609|B 395 455 481 515|R 421 450 497 540|B 408 408 507 511|B 353 406 423 499|R 378 426 457 487|B 419 455 466 490|R 454 461 612 639|B 592 597 616 677|R 545 598 611 671|B 564 565 615 643|R 540 573 599 602|R 525 595 657 723|B 491 591 678 681|R 554 593 674 724|B 587 655 686 741` },
  { base: 810, bars: `R 393 410 430 507|B 377 401 434 473|R 315 415 465 509|B 342 346 461 542|R 295 348 528 539|R 526 533 621 659|B 574 591 618 659|B 528 553 596 601|B 519 542 558 618|B 507 527 551 577|R 485 543 558 591|R 505 556 688 705|B 633 647 692 727|B 527 553 652 655|B 523 546 570 639|B 517 540 557 577|B 417 481 543 578|B 446 454 486 518|B 313 449 459 493|R 413 450 459 475|B 374 390 436 473|R 359 401 405 431|R 401 408 419 505|R 381 419 490 507|B 407 415 496 502|B 357 381 424 425|B 337 379 383 415|B 257 291 387 410|B 187 189 303 356|R 121 198 213 253|R 190 209 238 261|R 198 237 239 287|B 156 189 236 248|R 176 184 323 330|B 290 317 320 347|R 278 311 347 360|R 338 346 361 427|B 241 246 363 423|R 202 238 267 317` },
];

const FIRST_X = 301.4;
const STEP = 5.339;
const colors = { R: "#ff0000", B: "#0000ff" };
let index = 0;
let out = '<path d="M302 358.500H1554" stroke="#a0a0a0"/>';
for (const { base, bars } of blocks) {
  for (const bar of bars.split("|")) {
    const [dir, ...values] = bar.split(" ");
    const [high, top, bottom, low] = values.map((v) => (Number(v) + base) / 3);
    const x = FIRST_X + STEP * index++;
    out += `<path d="M${x} ${high}V${low}" stroke="${colors[dir]}" stroke-opacity=".6"/>`;
    out += `<path d="M${x} ${top}V${Math.max(bottom, top + 1)}" stroke="${colors[dir]}" stroke-width="3.6"/>`;
  }
}
document.getElementById("candles").innerHTML = out;
```
